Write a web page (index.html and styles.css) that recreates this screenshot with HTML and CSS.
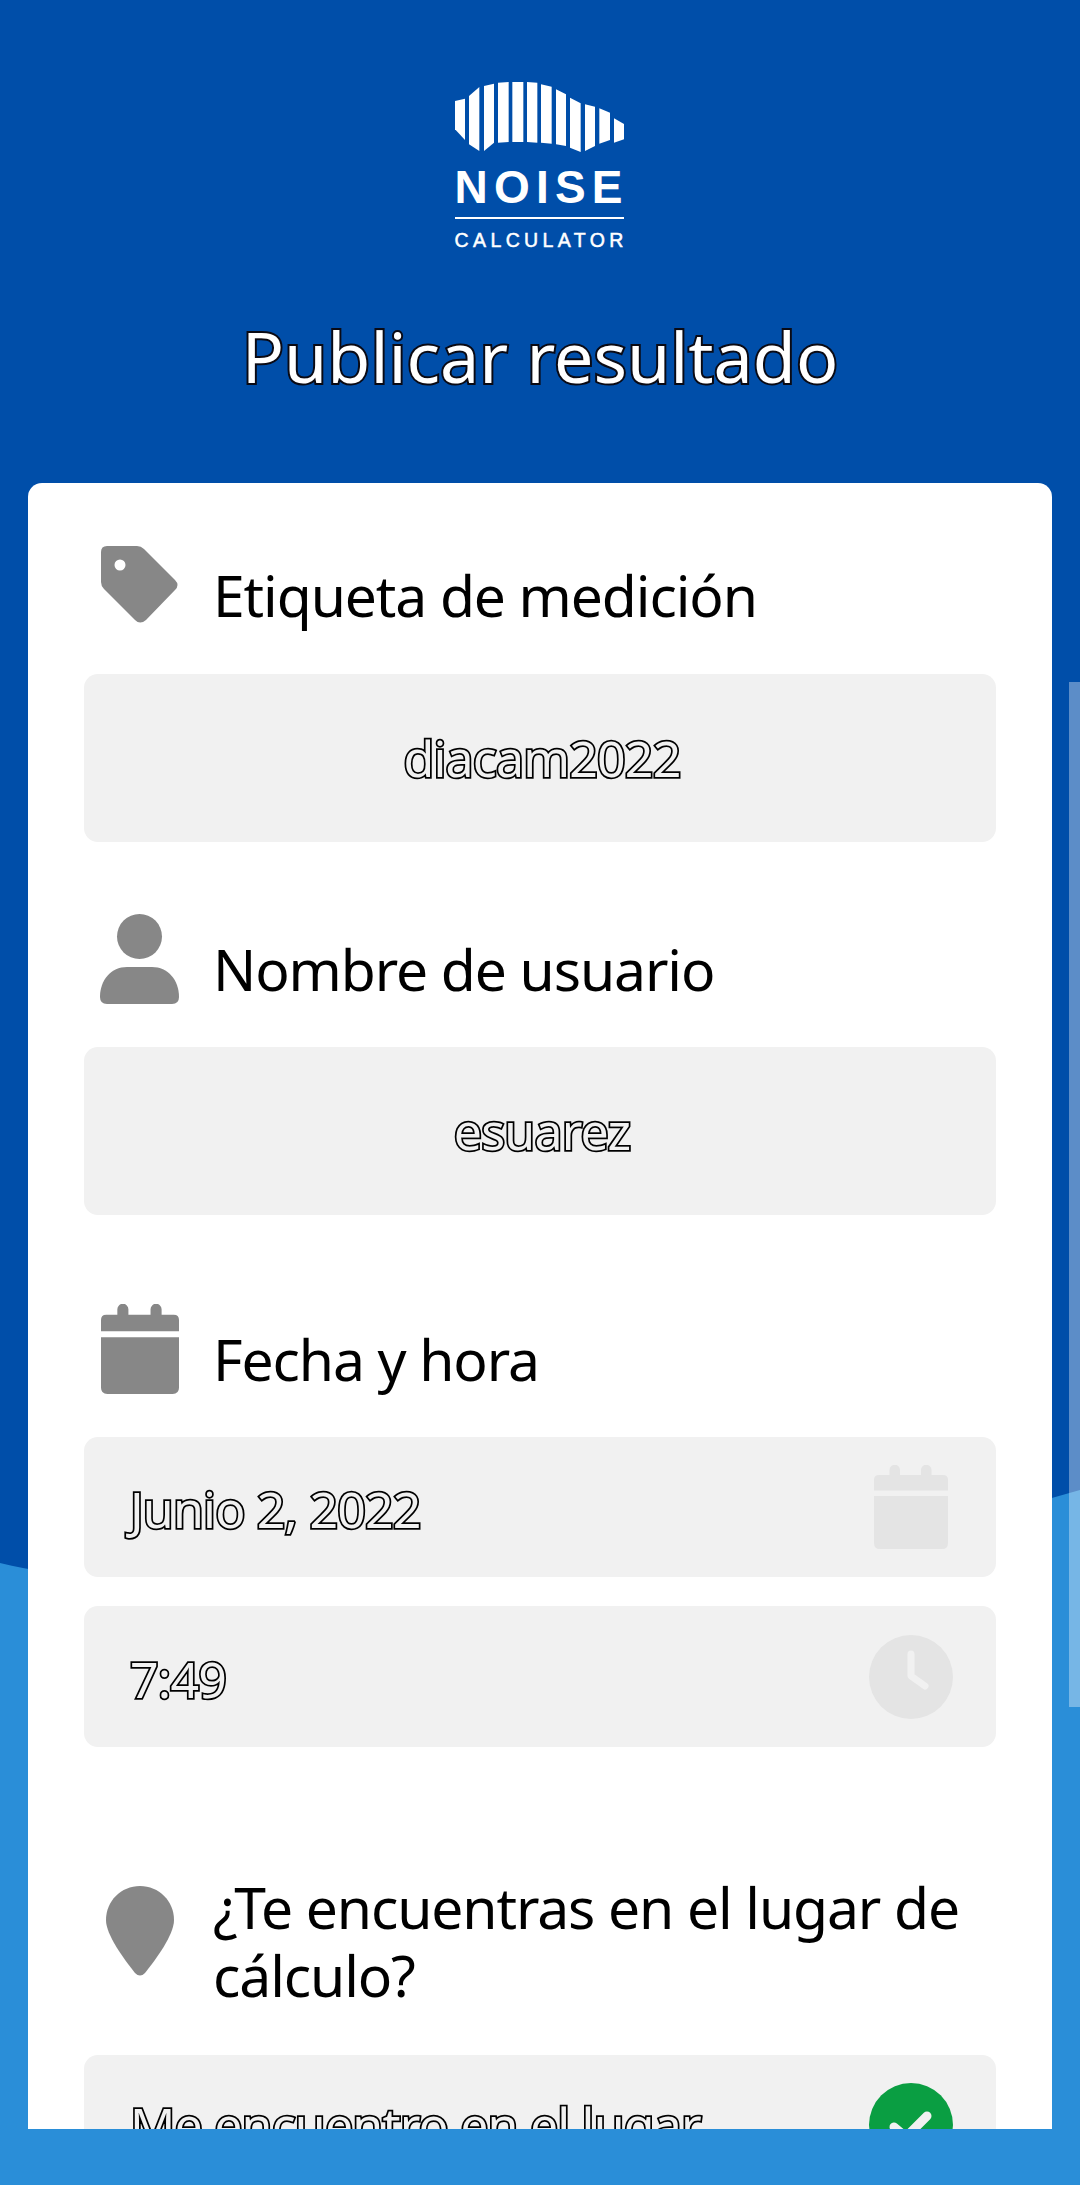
FILE: index.html
```html
<!DOCTYPE html>
<html lang="es">
<head>
<meta charset="utf-8">
<title>Publicar resultado</title>
<link rel="stylesheet" href="styles.css">
</head>
<body>
<div class="page">
  <svg class="wave" viewBox="0 0 1080 2185" preserveAspectRatio="none" aria-hidden="true">
    <path class="wave-fill" d="M0 1563 C200 1610 700 1600 1080 1490 L1080 2185 L0 2185 Z"/>
  </svg>

  <header class="header">
    <div class="logo">
      <svg class="logo-mark" viewBox="165 98 507 210" aria-hidden="true">
        <polygon points="165,155 195,148 195,272 165,240"/>
        <polygon points="207,140 238,113 238,305 207,285"/>
        <polygon points="252,110 282,103 282,280 252,305"/>
        <polygon points="294,100 326,98 326,278 294,280"/>
        <polygon points="337,98 370,98 370,278 337,278"/>
        <polygon points="381,98 412,100 412,280 381,278"/>
        <polygon points="423,105 455,112 455,283 423,280"/>
        <polygon points="468,120 498,135 498,290 468,285"/>
        <polygon points="510,145 542,162 542,308 510,295"/>
        <polygon points="555,165 585,172 585,290 555,305"/>
        <polygon points="598,177 630,190 630,272 598,283"/>
        <polygon points="642,207 672,224 672,270 642,280"/>
      </svg>
      <div class="logo-noise">NOISE</div>
      <div class="logo-rule"></div>
      <div class="logo-calc">CALCULATOR</div>
    </div>
    <h1 class="title">Publicar resultado</h1>
  </header>

  <main class="card">
    <section class="group group-tag">
      <div class="row">
        <div class="row-icon">
          <svg class="icon icon-tag" viewBox="0 0 78 78" aria-hidden="true">
            <path class="fill-gray" fill-rule="evenodd" d="M6 0H36Q40 0 43 3L74 34Q79 39 74 44L45 74Q39 79 34 74L3 43Q0 40 0 36V6Q0 0 6 0ZM19 13.5a5.5 5.5 0 1 0 0 11a5.5 5.5 0 1 0 0-11Z"/>
          </svg>
        </div>
        <h2 class="label">Etiqueta de medición</h2>
      </div>
      <div class="field field-tall field-center"><span class="value">diacam2022</span></div>
    </section>

    <section class="group group-user">
      <div class="row">
        <div class="row-icon">
          <svg class="icon icon-large" viewBox="0 0 80 90" aria-hidden="true">
            <circle class="fill-gray" cx="39.5" cy="22.5" r="22.5"/>
            <path class="fill-gray" d="M27 53H52C68 53 79 66 79 83Q79 90 72 90H7Q0 90 0 83C0 66 11 53 27 53Z"/>
          </svg>
        </div>
        <h2 class="label">Nombre de usuario</h2>
      </div>
      <div class="field field-tall field-center"><span class="value">esuarez</span></div>
    </section>

    <section class="group group-date">
      <div class="row">
        <div class="row-icon">
          <svg class="icon icon-cal" viewBox="0 0 74 84" preserveAspectRatio="none" aria-hidden="true">
            <path class="fill-gray" d="M15.500 10V5a5 5 0 0 1 10.500 0V10H47V5a5 5 0 0 1 10.500 0V10H69Q74 10 74 15V25.500H0V15Q0 10 5 10Z"/>
            <path class="fill-gray" d="M0 31H74V78Q74 84 68 84H6Q0 84 0 78Z"/>
          </svg>
        </div>
        <h2 class="label">Fecha y hora</h2>
      </div>
      <div class="field field-date">
        <span class="value value-low">Junio 2, 2022</span>
        <svg class="field-cal" viewBox="0 0 74 84" aria-hidden="true">
          <path class="fill-faint" d="M15.500 10V5a5 5 0 0 1 10.500 0V10H47V5a5 5 0 0 1 10.500 0V10H69Q74 10 74 15V25.500H0V15Q0 10 5 10Z"/>
          <path class="fill-faint" d="M0 31H74V78Q74 84 68 84H6Q0 84 0 78Z"/>
        </svg>
      </div>
      <div class="field field-time">
        <span class="value value-low">7:49</span>
        <svg class="field-round" viewBox="0 0 84 84" aria-hidden="true">
          <circle class="fill-faint" cx="42" cy="42" r="42"/>
          <path class="hand" d="M42 19V41L56 51"/>
        </svg>
      </div>
    </section>

    <section class="group group-place">
      <div class="row">
        <div class="row-icon">
          <svg class="icon icon-pin" viewBox="0 0 68 90" aria-hidden="true">
            <path class="fill-gray" d="M34 0C53 0 68 15 68 34C68 49 50 73 39 87Q34 92 29 87C18 73 0 49 0 34C0 15 15 0 34 0Z"/>
          </svg>
        </div>
        <h2 class="label">¿Te encuentras en el lugar de cálculo?</h2>
      </div>
      <div class="field field-place">
        <span class="value">Me encuentro en el lugar</span>
        <svg class="field-round" viewBox="0 0 84 84" aria-hidden="true">
          <circle class="fill-green" cx="42" cy="42" r="42"/>
          <path class="tick" d="M25 44L37 54L58 33"/>
        </svg>
      </div>
    </section>
  </main>

  <div class="scrollbar"></div>
  <div class="bottom-bar"></div>
</div>
</body>
</html>
```
FILE: styles.css
```css
* { box-sizing: border-box; }
html, body { margin: 0; padding: 0; }
body { font-family: "Noto Sans", "Open Sans", sans-serif; background: #004ea9; }

.page {
  position: relative;
  width: 1080px;
  height: 2185px;
  overflow: hidden;
  background: #004ea9;
}
.wave { position: absolute; inset: 0; width: 100%; height: 100%; }
.wave-fill { fill: #2a8ed8; }

.header {
  position: relative;
  display: flex;
  flex-direction: column;
  align-items: center;
  padding-top: 82px;
  height: 483px;
}
.logo {
  display: flex;
  flex-direction: column;
  width: 169px;
  margin-right: 2px;
  color: #fff;
  font-family: "Liberation Sans", Arial, sans-serif;
  font-weight: 700;
}
.logo-mark { display: block; width: 169px; height: 70px; fill: #fff; }
.logo-noise {
  margin-top: 12px;
  font-size: 46px;
  line-height: 46px;
  letter-spacing: 6.200px;
  white-space: nowrap;
}
.logo-rule { height: 2px; margin-top: 7px; background: #fff; }
.logo-calc {
  margin-top: 10px;
  font-size: 19.500px;
  line-height: 22px;
  letter-spacing: 4.400px;
  font-weight: 400;
  white-space: nowrap;
  -webkit-text-stroke: 0.5px #fff;
}
.title {
  margin: 60px 0 0;
  font-size: 70px;
  line-height: 90px;
  font-weight: 400;
  color: #fff;
  white-space: nowrap;
  -webkit-text-stroke: 4px #0a0a14;
  paint-order: stroke fill;
}

.card {
  position: relative;
  display: flex;
  flex-direction: column;
  margin: 0 28px;
  height: 1800px;
  padding: 63px 56px 0;
  background: #fff;
  border-radius: 14px 14px 0 0;
}
.group-user { margin-top: 72px; }
.group-date { margin-top: 89px; }
.group-place { margin-top: 124px; }

.row { display: flex; align-items: center; padding-left: 16px; }
.row-icon { flex: none; width: 80px; margin: 0 33px 18px 0; display: flex; justify-content: center; }
.icon { display: block; }
.icon-tag { width: 78px; height: 78px; }
.icon-large { width: 80px; height: 90px; }
.icon-cal { width: 78px; height: 90px; }
.icon-pin { width: 68px; height: 90px; }
.fill-gray { fill: #878787; }
.fill-faint { fill: #e4e4e4; }
.fill-green { fill: #0a9e42; }
.hand, .tick { fill: none; stroke: #f1f1f1; stroke-linecap: round; stroke-linejoin: round; }
.hand { stroke-width: 7px; }
.tick { stroke-width: 9px; }

.label {
  margin: 2px 0 0;
  font-size: 57px;
  line-height: 68px;
  font-weight: 400;
  letter-spacing: -1.100px;
  color: #000;
}

.field {
  display: flex;
  align-items: center;
  justify-content: space-between;
  padding: 0 42px 0 46px;
  background: #f1f1f1;
  border-radius: 14px;
}
.field-tall { height: 168px; justify-content: center; margin-top: 25px; }
.group-tag .field-tall { margin-top: 32px; }
.field-date { height: 140px; margin-top: 25px; padding-right: 48px; }
.field-time { height: 141px; margin-top: 29px; padding-right: 43px; }
.field-place { height: 140px; margin-top: 46px; padding-right: 43px; }
.value {
  font-size: 50px;
  line-height: 60px;
  letter-spacing: -0.800px;
  color: #f1f1f1;
  white-space: nowrap;
  -webkit-text-stroke: 3.500px #000;
  paint-order: stroke fill;
}
.value-low { margin-top: 4px; }
.field-cal { display: block; flex: none; width: 74px; height: 84px; }
.field-round { display: block; flex: none; width: 84px; height: 84px; }

.scrollbar {
  position: absolute;
  top: 682px;
  right: 0;
  width: 11px;
  height: 1025px;
  background: rgba(255, 255, 255, 0.36);
}
.bottom-bar {
  position: absolute;
  left: 0;
  right: 0;
  bottom: 0;
  height: 56px;
  background: #2a8ed8;
}
```
